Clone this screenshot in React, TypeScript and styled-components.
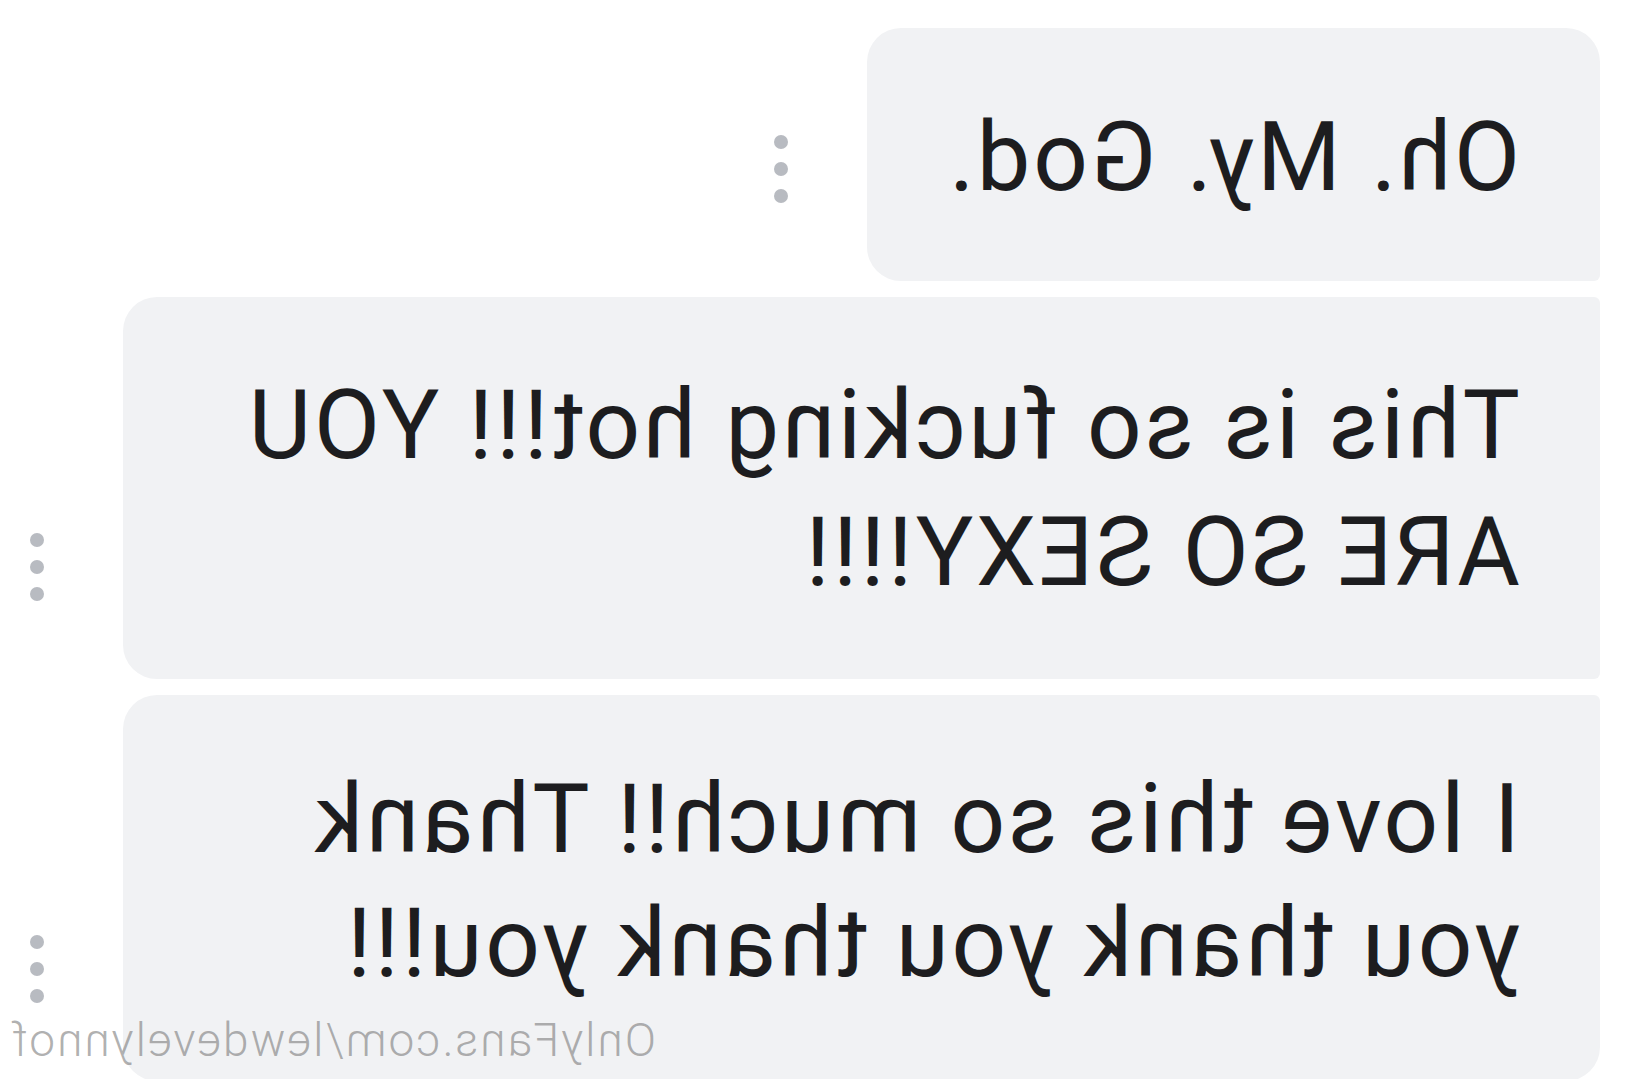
import React from "react";
import styled, { createGlobalStyle } from "styled-components";

const GlobalStyle = createGlobalStyle`
  html, body {
    margin: 0;
    padding: 0;
    background: #ffffff;
    overflow: hidden;
  }
`;

const Page = styled.div`
  position: relative;
  width: 1632px;
  height: 1079px;
  box-sizing: border-box;
  padding: 28px 32px 0 32px;
  display: flex;
  flex-direction: column;
  gap: 16px;
  background: #ffffff;
  transform: scaleX(-1);
  overflow: hidden;
  font-family: Roboto, "Liberation Sans", sans-serif;
`;

const Row = styled.div`
  display: flex;
  align-items: flex-end;
  gap: 79px;
`;

const Bubble = styled.div<{ $width: number; $radius: string; $padTop: number; $padBottom: number; $lineHeight: number }>`
  box-sizing: border-box;
  width: ${(p) => p.$width}px;
  flex: none;
  background: #f1f2f4;
  border-radius: ${(p) => p.$radius};
  padding: ${(p) => p.$padTop}px 80px ${(p) => p.$padBottom}px 80px;
  color: #1d1d1f;
  font-size: 96px;
  font-weight: 400;
  letter-spacing: 2.8px;
  line-height: ${(p) => p.$lineHeight}px;
  white-space: nowrap;
`;

const Line = styled.div`
  display: block;
`;

const Dots = styled.div`
  display: flex;
  flex-direction: column;
  gap: 13px;
  margin-bottom: 78px;
`;

const Dot = styled.span`
  display: block;
  width: 14px;
  height: 14px;
  border-radius: 50%;
  background: #b8bbc1;
`;

const Watermark = styled.div`
  position: absolute;
  left: 976px;
  top: 1013px;
  font-family: Roboto, "Liberation Sans", sans-serif;
  font-weight: 300;
  font-size: 46px;
  line-height: 54px;
  color: rgba(110, 110, 110, 0.55);
  white-space: nowrap;
  letter-spacing: 2px;
`;

const MoreDots = () => (
  <Dots>
    <Dot />
    <Dot />
    <Dot />
  </Dots>
);

export default function App() {
  return (
    <>
      <GlobalStyle />
      <Page>
        <Row>
          <Bubble $width={733} $radius="34px 34px 34px 6px" $padTop={66} $padBottom={60} $lineHeight={127}>
            <Line>Oh. My. God.</Line>
          </Bubble>
          <MoreDots />
        </Row>
        <Row>
          <Bubble $width={1477} $radius="6px 34px 34px 6px" $padTop={65} $padBottom={63} $lineHeight={127}>
            <Line>This is so fucking hot!!! YOU</Line>
            <Line>ARE SO SEXY!!!!</Line>
          </Bubble>
          <MoreDots />
        </Row>
        <Row>
          <Bubble $width={1477} $radius="6px 34px 34px 34px" $padTop={62} $padBottom={76} $lineHeight={124}>
            <Line>I love this so much!! Thank</Line>
            <Line>you thank you thank you!!!</Line>
          </Bubble>
          <MoreDots />
        </Row>
        <Watermark>OnlyFans.com/lewdevelynnof</Watermark>
      </Page>
    </>
  );
}
